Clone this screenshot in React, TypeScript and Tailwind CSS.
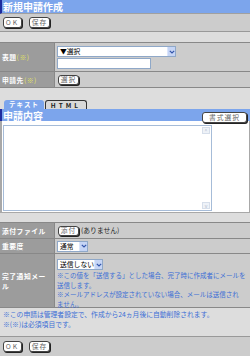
import React from "react";

function Btn({ children, className = "" }: { children: React.ReactNode; className?: string }) {
  return (
    <div
      className={`inline-flex items-center justify-center bg-white border border-[#444] rounded-[3px] shadow-[1px_1px_0_#222] text-[6.8px] text-[#666] tracking-[1px] leading-none ${className}`}
    >
      {children}
    </div>
  );
}

function Chevron() {
  return (
    <svg width="6" height="4" viewBox="0 0 6 4">
      <path d="M0.8 0.8L3 3L5.2 0.8" stroke="#3355aa" strokeWidth="1.2" fill="none" />
    </svg>
  );
}

function Select({ text, className = "" }: { text: string; className?: string }) {
  return (
    <div className={`flex h-[11px] bg-white border border-[#8fa8c8] ${className}`}>
      <div className="flex-1 text-[6.8px] leading-[9px] text-black pl-[2px] whitespace-nowrap">{text}</div>
      <div className="w-[8px] bg-[#c6d5f5] border-l border-[#dbe5fb] flex items-center justify-center">
        <Chevron />
      </div>
    </div>
  );
}

function Req() {
  return <span className="text-[#e4e45c] font-normal">(※)</span>;
}

function Label({ children }: { children: React.ReactNode }) {
  return (
    <div className="w-[55px] shrink-0 bg-[#9c9c9c] border-r border-[#888] text-white font-bold text-[6.8px] tracking-[0.5px] leading-[10px] flex items-center pl-[2px] pr-[1px]">
      <div>{children}</div>
    </div>
  );
}

function Toolbar({ top }: { top?: boolean }) {
  return (
    <div
      className={`flex items-center gap-[7px] px-[3px] bg-[#cccccc] ${
        top ? "h-[18px] border-b border-[#999]" : "h-[20px] border-t border-[#999]"
      }`}
    >
      <Btn className="w-[19px] h-[11px] tracking-[2px]">OK</Btn>
      <Btn className="w-[21px] h-[11px]">保存</Btn>
    </div>
  );
}

export default function App() {
  return (
    <div className="w-[250px] h-[356px] bg-[#dddddd] overflow-hidden font-['Noto_Sans_CJK_JP',sans-serif]">
      {/* title */}
      <div className="h-[14px] bg-[#7ca5ec] border-l-2 border-[#1e2c9e] border-b border-b-[#a0a0a0] text-white text-[10px] font-bold leading-[13px] pl-[1px]">
        新規申請作成
      </div>
      <Toolbar top />

      {/* header form */}
      <div className="mt-[10px] border-t border-[#888]">
        <div className="flex h-[29px] border-b border-[#888]">
          <Label>
            表題<Req />
          </Label>
          <div className="flex-1 bg-[#cccccc] pl-[2px] pt-[3px] flex flex-col gap-[1px]">
            <Select text="▼選択" className="w-[119px]" />
            <div className="w-[94px] h-[11px] bg-white border border-[#8fa8c8]" />
          </div>
        </div>
        <div className="flex h-[16px] border-b border-[#888]">
          <Label>
            申請先<Req />
          </Label>
          <div className="flex-1 bg-[#cccccc] pl-[3px] flex items-center">
            <Btn className="w-[21px] h-[10px]">選択</Btn>
          </div>
        </div>
      </div>

      {/* tabs */}
      <div className="mt-[12px] flex pl-[4px] gap-[1px] h-[9px]">
        <div className="w-[40px] h-[9px] overflow-hidden bg-[#7ca5ec] rounded-t-[3px] text-white font-bold text-[6.5px] tracking-[1px] leading-[9px] text-center">
          テキスト
        </div>
        <div className="w-[42px] h-[9px] overflow-hidden bg-[#d8d8d8] border border-b-0 border-[#333] rounded-t-[3px] text-[#222] font-bold text-[6.5px] tracking-[3px] leading-[8px] text-center">
          HTML
        </div>
      </div>
      <div className="h-[12px] bg-[#7ca5ec] border-l-2 border-[#1e2c9e] flex items-start justify-between pr-[3px]">
        <div className="text-white text-[10px] font-bold leading-[11px] pt-[1px] pl-[1px]">申請内容</div>
        <Btn className="w-[45px] h-[11px] mt-[3px] relative tracking-[1.5px] text-[#444]">書式選択</Btn>
      </div>
      <div className="h-[92px] bg-white border-l-2 border-r border-b border-[#a8a8a8] pt-[4px] pl-[1px]">
        <div className="w-[209px] h-[86px] border border-[#a6bcd8] flex">
          <div className="flex-1" />
          <div className="w-[10px] flex flex-col justify-between items-center py-[1px]">
            <div className="w-[8px] h-[7px] bg-[#eef2f8] border border-[#d6deea] flex items-center justify-center text-[#b0b8c8] text-[5px] leading-none">
              ^
            </div>
            <div className="w-[8px] h-[7px] bg-[#eef2f8] border border-[#d6deea] flex items-center justify-center text-[#b0b8c8] text-[5px] leading-none">
              v
            </div>
          </div>
        </div>
      </div>

      {/* lower form */}
      <div className="mt-[9px] border-t border-[#888]">
        <div className="flex h-[16px] border-b border-[#888]">
          <Label>添付ファイル</Label>
          <div className="flex-1 bg-[#cccccc] pl-[3px] flex items-center gap-[2px]">
            <Btn className="w-[21px] h-[10px]">添付</Btn>
            <span className="text-[6.8px] text-[#222]">(ありません)</span>
          </div>
        </div>
        <div className="flex h-[15px] border-b border-[#888]">
          <Label>重要度</Label>
          <div className="flex-1 bg-[#cccccc] pl-[2px] flex items-center">
            <Select text="通常" className="w-[31px]" />
          </div>
        </div>
        <div className="flex h-[54px] border-b border-[#888]">
          <Label>完了通知メール</Label>
          <div className="flex-1 bg-[#cccccc] pl-[2px] pt-[5px]">
            <Select text="送信しない" className="w-[46px]" />
            <div className="text-[6.5px] leading-[9.5px] text-[#3c6fd6] whitespace-nowrap mt-[1px]">
              ※この値を「送信する」とした場合、完了時に作成者にメールを
              <br />
              送信します。
              <br />
              ※メールアドレスが設定されていない場合、メールは送信され
              <br />
              ません。
            </div>
          </div>
        </div>
      </div>

      {/* notes */}
      <div className="pl-[3px] pt-[1px] text-[6.8px] leading-[10px] text-[#3c6fd6] whitespace-nowrap">
        ※この申請は管理者設定で、作成から24ヵ月後に自動削除されます。
        <br />
        ※(※)は必須項目です。
      </div>

      <div className="mt-[7px]">
        <Toolbar />
      </div>
    </div>
  );
}
